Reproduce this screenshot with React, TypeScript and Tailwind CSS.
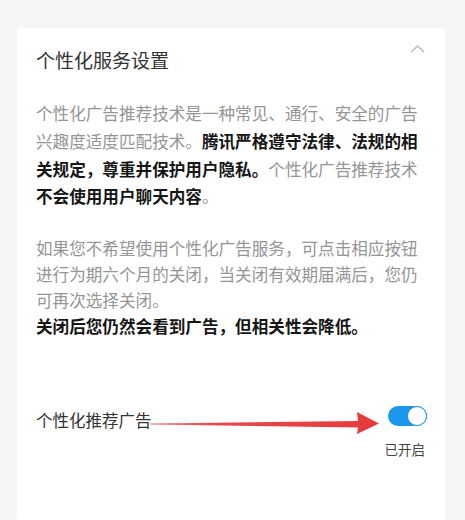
import React from "react";

const font = { fontFamily: '"Noto Sans CJK SC", "Noto Sans", sans-serif' };

function Toggle() {
  return (
    <div className="relative h-[20px] w-[39px] rounded-full bg-[#1b97ee]">
      <div className="absolute right-0 top-0 h-[20px] w-[20px] rounded-full border-[1.5px] border-[#1b97ee] bg-white" />
    </div>
  );
}

/** Personalised ad settings card with a red annotation arrow pointing at the switch. */
export default function App() {
  return (
    <div className="relative h-[520px] w-[465px] overflow-hidden bg-[#f6f6f6] pl-[17px] pr-[20px] pt-[28px]" style={font}>
      <div className="relative h-[492px] rounded-[3px] bg-white px-[19px] pt-[19px]">
        <svg className="absolute right-[20px] top-[17px]" width="15" height="8" viewBox="0 0 15 8">
          <polyline points="1,7 7.5,1 14,7" fill="none" stroke="#b8b8b8" strokeWidth="1.4" />
        </svg>

        <h2 className="text-[19px] leading-[26px] text-[#333]">个性化服务设置</h2>

        <p className="mt-[27px] text-[16.6px] leading-[27.8px] text-[#959595]">
          个性化广告推荐技术是一种常见、通行、安全的广告
          <br />
          兴趣度适度匹配技术。
          <b className="font-bold text-[#161616]">腾讯严格遵守法律、法规的相</b>
          <br />
          <b className="font-bold text-[#161616]">关规定，尊重并保护用户隐私。</b>
          个性化广告推荐技术
          <br />
          <b className="font-bold text-[#161616]">不会使用用户聊天内容</b>。
        </p>

        <p className="mt-[24px] text-[16.6px] leading-[26px] text-[#959595]">
          如果您不希望使用个性化广告服务，可点击相应按钮
          <br />
          进行为期六个月的关闭，当关闭有效期届满后，您仍
          <br />
          可再次选择关闭。
          <br />
          <b className="font-bold text-[#161616]">关闭后您仍然会看到广告，但相关性会降低。</b>
        </p>

        <div className="mt-[67px] flex items-start justify-between">
          <span className="pt-[1px] text-[16.5px] leading-[26px] text-[#333]">个性化推荐广告</span>
          <div className="-mr-[1px] flex flex-col items-end">
            <Toggle />
            <span className="mr-[2px] mt-[14px] text-[13.5px] leading-[18px] text-[#444]">已开启</span>
          </div>
        </div>
      </div>

      <svg className="pointer-events-none absolute left-0 top-0" width="465" height="520" viewBox="0 0 465 520">
        <defs>
          <linearGradient id="arrow" x1="150" y1="0" x2="379" y2="0" gradientUnits="userSpaceOnUse">
            <stop offset="0" stopColor="#e87a7c" />
            <stop offset="0.3" stopColor="#e5484b" />
            <stop offset="1" stopColor="#e63a3c" />
          </linearGradient>
        </defs>
        <path
          d="M150 423.4 L358 421 L357 412 L379 423.5 L357 434 L358 427.5 L150 424.6 Z"
          fill="url(#arrow)"
        />
      </svg>
    </div>
  );
}
